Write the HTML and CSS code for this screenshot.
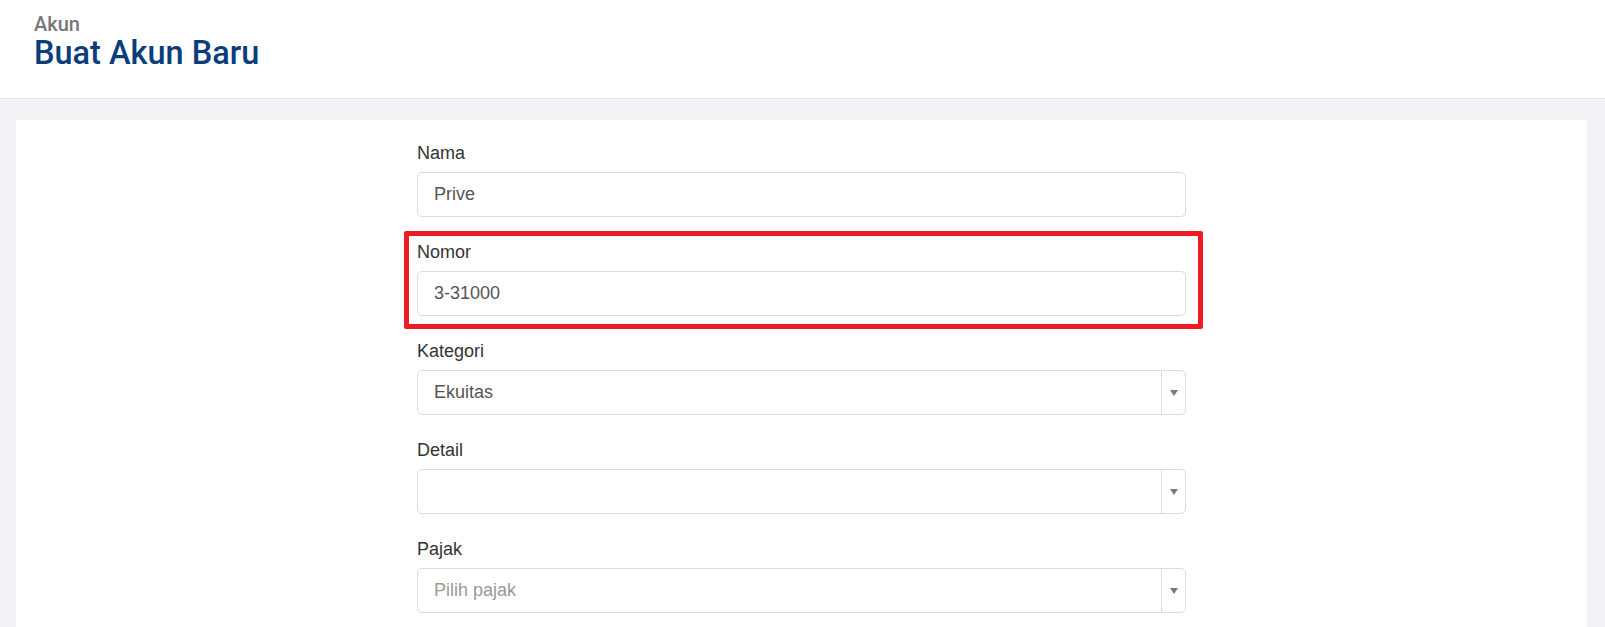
FILE: index.html
```html
<!DOCTYPE html>
<html lang="id">
<head>
  <meta charset="UTF-8" />
  <meta name="viewport" content="width=device-width, initial-scale=1.0"/>
  <title>Buat Akun Baru</title>
  <link rel="stylesheet" href="styles.css">
</head>
<body>

  <!-- En-tête -->
  <header class="page-header">
    <div class="crumb">Akun</div>
    <h1 class="title">Buat Akun Baru</h1>
  </header>

  <main class="content">
    <div class="card">
      <form class="form">

        <div class="field">
          <label class="label" for="nama">Nama</label>
          <input class="input" id="nama" type="text" value="Prive" />
        </div>

        <div class="field highlight">
          <label class="label" for="nomor">Nomor</label>
          <input class="input" id="nomor" type="text" value="3-31000" />
        </div>

        <div class="field">
          <div class="label">Kategori</div>
          <div class="select">
            <span class="select-value">Ekuitas</span>
            <span class="select-arrow"></span>
          </div>
        </div>

        <div class="field">
          <div class="label">Detail</div>
          <div class="select">
            <span class="select-value"></span>
            <span class="select-arrow"></span>
          </div>
        </div>

        <div class="field">
          <div class="label">Pajak</div>
          <div class="select">
            <span class="select-value placeholder">Pilih pajak</span>
            <span class="select-arrow"></span>
          </div>
        </div>

      </form>
    </div>
  </main>

</body>
</html>
```

FILE: styles.css
```css
* {
  box-sizing: border-box;
  margin: 0;
  padding: 0;
}

html, body {
  height: 100%;
  background-color: #f2f3f7;
  overflow: hidden;
  font-family: "Liberation Sans", Arial, sans-serif;
}

.page-header {
  height: 99px;
  background: #fff;
  border-bottom: 1px solid #e3e4ea;
  padding: 14px 34px 0;
  font-family: Roboto, "Liberation Sans", sans-serif;
  font-weight: 500;
}

.crumb {
  font-size: 20px;
  line-height: 20px;
  color: #777;
}

.title {
  font-size: 32.5px;
  line-height: 38px;
  font-weight: 500;
  color: #0b3c7b;
}

.content {
  padding: 21px 18px 0 16px;
  height: calc(100% - 99px);
}

.card {
  background: #fff;
  height: 100%;
  padding-top: 22px;
}

.form {
  width: 769px;
  margin: 0 auto;
  display: flex;
  flex-direction: column;
  gap: 24px;
}

.field {
  position: relative;
  display: flex;
  flex-direction: column;
  gap: 8px;
}

/* cadre rouge d'annotation */
.field.highlight::after {
  content: "";
  position: absolute;
  top: -10px;
  bottom: -13px;
  left: -13px;
  right: -17px;
  border: 5px solid #ed1c24;
  border-radius: 2px;
  pointer-events: none;
}

.label {
  font-size: 18px;
  line-height: 22px;
  color: #333;
}

.input,
.select {
  height: 45px;
  border: 1px solid #dcdcdc;
  border-radius: 5px;
  background: #fff;
  font-family: "Liberation Sans", Arial, sans-serif;
  font-size: 18px;
  color: #555;
}

.input {
  width: 100%;
  padding: 0 16px;
  outline: none;
}

.select {
  display: flex;
  align-items: stretch;
}

.select-value {
  flex: 1;
  display: flex;
  align-items: center;
  padding: 0 16px;
}

.select-value.placeholder {
  color: #999;
}

.select-arrow {
  width: 24px;
  border-left: 1px solid #dcdcdc;
  display: flex;
  align-items: center;
  justify-content: center;
}

.select-arrow::before {
  content: "";
  border-left: 4px solid transparent;
  border-right: 4px solid transparent;
  border-top: 6px solid #7a7a7a;
}
```
